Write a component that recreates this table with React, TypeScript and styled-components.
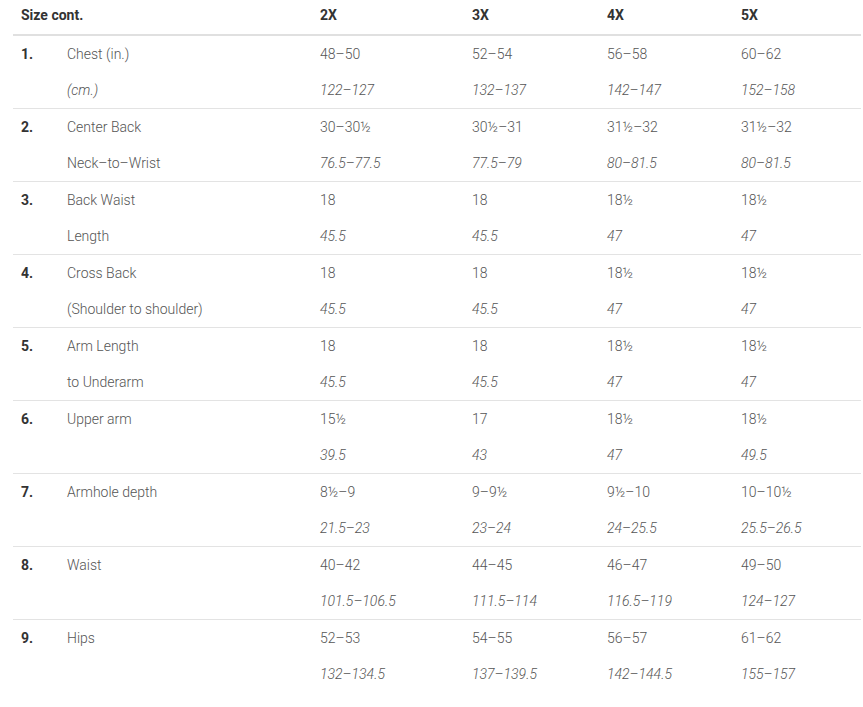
import React from "react";
import styled, { createGlobalStyle } from "styled-components";

type Group = {
  num: string;
  label: [string, string];
  labelItalic?: boolean;
  inch: string[];
  cm: string[];
};

const sizes = ["2X", "3X", "4X", "5X"];
const colWidths = [46, 253, 152, 135, 134, 128];

const groups: Group[] = [
  { num: "1.", label: ["Chest (in.)", "(cm.)"], labelItalic: true, inch: ["48–50", "52–54", "56–58", "60–62"], cm: ["122–127", "132–137", "142–147", "152–158"] },
  { num: "2.", label: ["Center Back", "Neck–to–Wrist"], inch: ["30–30½", "30½–31", "31½–32", "31½–32"], cm: ["76.5–77.5", "77.5–79", "80–81.5", "80–81.5"] },
  { num: "3.", label: ["Back Waist", "Length"], inch: ["18", "18", "18½", "18½"], cm: ["45.5", "45.5", "47", "47"] },
  { num: "4.", label: ["Cross Back", "(Shoulder to shoulder)"], inch: ["18", "18", "18½", "18½"], cm: ["45.5", "45.5", "47", "47"] },
  { num: "5.", label: ["Arm Length", "to Underarm"], inch: ["18", "18", "18½", "18½"], cm: ["45.5", "45.5", "47", "47"] },
  { num: "6.", label: ["Upper arm", ""], inch: ["15½", "17", "18½", "18½"], cm: ["39.5", "43", "47", "49.5"] },
  { num: "7.", label: ["Armhole depth", ""], inch: ["8½–9", "9–9½", "9½–10", "10–10½"], cm: ["21.5–23", "23–24", "24–25.5", "25.5–26.5"] },
  { num: "8.", label: ["Waist", ""], inch: ["40–42", "44–45", "46–47", "49–50"], cm: ["101.5–106.5", "111.5–114", "116.5–119", "124–127"] },
  { num: "9.", label: ["Hips", ""], inch: ["52–53", "54–55", "56–57", "61–62"], cm: ["132–134.5", "137–139.5", "142–144.5", "155–157"] },
];

const GlobalStyle = createGlobalStyle`
  body {
    margin: 0;
    background: #fff;
    font-family: Roboto, "Liberation Sans", sans-serif;
  }
`;

const Table = styled.table`
  margin-left: 13px;
  width: 848px;
  border-collapse: collapse;
  table-layout: fixed;
  font-size: 14px;
  color: #555;
`;

const Col = styled.col<{ $w: number }>`
  width: ${(p) => p.$w}px;
`;

const HeadCell = styled.th`
  height: 30px;
  padding: 0 8px 4px;
  text-align: left;
  vertical-align: middle;
  font-weight: 700;
  color: #333;
  border-bottom: 2px solid #e0e0e0;
`;

const CmRow = styled.tr`
  border-bottom: 1px solid #e3e3e3;
  &:last-child {
    border-bottom: none;
  }
`;

const NumCell = styled.td`
  height: 36px;
  padding: 0 8px;
  vertical-align: top;
  line-height: 36px;
  font-weight: 700;
  color: #333;
`;

const Cell = styled.td<{ $italic?: boolean }>`
  height: 36px;
  padding: 0 8px;
  vertical-align: middle;
  font-weight: 300;
  font-style: ${(p) => (p.$italic ? "italic" : "normal")};
  white-space: nowrap;
`;

export default function App() {
  return (
    <>
      <GlobalStyle />
      <Table>
        <colgroup>
          {colWidths.map((w, i) => (
            <Col key={i} $w={w} />
          ))}
        </colgroup>
        <thead>
          <tr>
            <HeadCell colSpan={2}>Size cont.</HeadCell>
            {sizes.map((s) => (
              <HeadCell key={s}>{s}</HeadCell>
            ))}
          </tr>
        </thead>
        <tbody>
          {groups.map((g) => (
            <React.Fragment key={g.num}>
              <tr>
                <NumCell rowSpan={2}>{g.num}</NumCell>
                <Cell>{g.label[0]}</Cell>
                {g.inch.map((v, i) => (
                  <Cell key={i}>{v}</Cell>
                ))}
              </tr>
              <CmRow>
                <Cell $italic={g.labelItalic}>{g.label[1]}</Cell>
                {g.cm.map((v, i) => (
                  <Cell key={i} $italic>
                    {v}
                  </Cell>
                ))}
              </CmRow>
            </React.Fragment>
          ))}
        </tbody>
      </Table>
    </>
  );
}
